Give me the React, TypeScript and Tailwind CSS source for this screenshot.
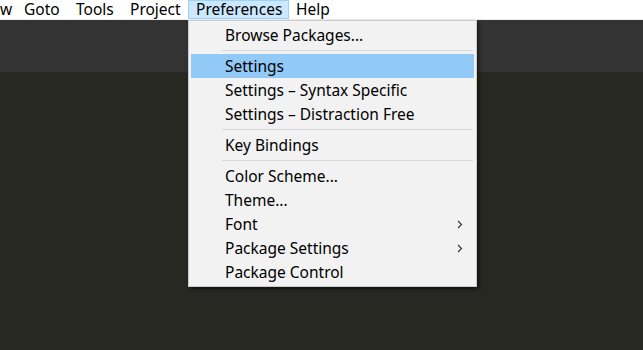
import React from "react";

const font = { fontFamily: '"Noto Sans", "Open Sans", sans-serif' };

type Item = { label: string; arrow?: boolean; active?: boolean } | "sep";

const items: Item[] = [
  { label: "Browse Packages..." },
  "sep",
  { label: "Settings", active: true },
  { label: "Settings – Syntax Specific" },
  { label: "Settings – Distraction Free" },
  "sep",
  { label: "Key Bindings" },
  "sep",
  { label: "Color Scheme..." },
  { label: "Theme..." },
  { label: "Font", arrow: true },
  { label: "Package Settings", arrow: true },
  { label: "Package Control" },
];

function Chevron() {
  return (
    <svg width="6" height="9" viewBox="0 0 6 9" className="block">
      <path d="M1 1 L4.5 4.5 L1 8" fill="none" stroke="#333" strokeWidth="1.1" />
    </svg>
  );
}

export default function App() {
  return (
    <div className="relative w-[643px] h-[350px] overflow-hidden bg-[#272822]" style={font}>
      <div className="flex h-[19px] bg-white text-[15.5px] leading-[19px] text-black whitespace-nowrap">
        <div className="w-[24px]">w</div>
        <div className="w-[52px]">Goto</div>
        <div className="w-[54px]">Tools</div>
        <div className="w-[58px]">Project</div>
        <div className="w-[101px] pl-[7px] bg-[#cce8ff] border border-[#99d1ff] leading-[17px]">Preferences</div>
        <div className="pl-[7px]">Help</div>
      </div>
      <div className="h-px bg-[#f0f0f0]" />
      <div className="h-[52px] bg-[#333333]" />

      <div className="absolute left-[188px] top-[20px] w-[289px] h-[267px] bg-[#f2f2f2] border border-[#cccccc] shadow-[2px_2px_3px_rgba(0,0,0,0.5)] py-[2px] pl-[2px] pr-[2px] text-[15.5px] text-black">
        {items.map((it, i) =>
          it === "sep" ? (
            <div key={i} className="h-[7px] flex items-center pl-[31px] pr-px">
              <div className="h-px w-full bg-[#d7d7d7]" />
            </div>
          ) : (
            <div
              key={i}
              className={`h-[24px] flex items-center pl-[34px] pr-[11px] ${it.active ? "bg-[#91c9f7]" : ""}`}
            >
              <span className="flex-1 leading-[24px] whitespace-nowrap">{it.label}</span>
              {it.arrow ? <Chevron /> : null}
            </div>
          )
        )}
      </div>
    </div>
  );
}
